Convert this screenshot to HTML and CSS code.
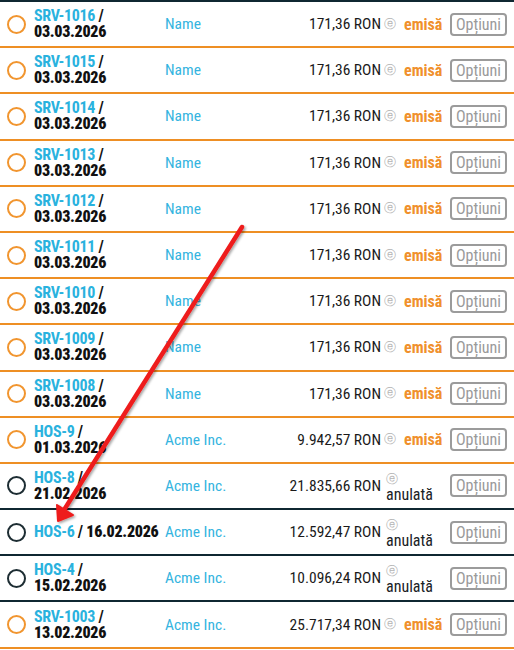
FILE: index.html
```html
<!DOCTYPE html>
<html lang="ro">
<head>
<meta charset="utf-8">
<title>Facturi</title>
<link rel="stylesheet" href="styles.css">
</head>
<body>
<div class="list">
  <div class="row orange">
    <div class="c-radio"><span class="radio"></span></div>
    <div class="c-id"><a class="num">SRV-1016</a> /<br><b>03.03.2026</b></div>
    <div class="c-name">Name</div>
    <div class="c-amount">171,36 RON</div>
    <div class="c-status"><span class="e">ⓔ</span><span class="st-em">emisă</span></div>
    <div class="c-btn"><span class="btn">Opțiuni</span></div>
  </div>
  <div class="row orange">
    <div class="c-radio"><span class="radio"></span></div>
    <div class="c-id"><a class="num">SRV-1015</a> /<br><b>03.03.2026</b></div>
    <div class="c-name">Name</div>
    <div class="c-amount">171,36 RON</div>
    <div class="c-status"><span class="e">ⓔ</span><span class="st-em">emisă</span></div>
    <div class="c-btn"><span class="btn">Opțiuni</span></div>
  </div>
  <div class="row orange">
    <div class="c-radio"><span class="radio"></span></div>
    <div class="c-id"><a class="num">SRV-1014</a> /<br><b>03.03.2026</b></div>
    <div class="c-name">Name</div>
    <div class="c-amount">171,36 RON</div>
    <div class="c-status"><span class="e">ⓔ</span><span class="st-em">emisă</span></div>
    <div class="c-btn"><span class="btn">Opțiuni</span></div>
  </div>
  <div class="row orange">
    <div class="c-radio"><span class="radio"></span></div>
    <div class="c-id"><a class="num">SRV-1013</a> /<br><b>03.03.2026</b></div>
    <div class="c-name">Name</div>
    <div class="c-amount">171,36 RON</div>
    <div class="c-status"><span class="e">ⓔ</span><span class="st-em">emisă</span></div>
    <div class="c-btn"><span class="btn">Opțiuni</span></div>
  </div>
  <div class="row orange">
    <div class="c-radio"><span class="radio"></span></div>
    <div class="c-id"><a class="num">SRV-1012</a> /<br><b>03.03.2026</b></div>
    <div class="c-name">Name</div>
    <div class="c-amount">171,36 RON</div>
    <div class="c-status"><span class="e">ⓔ</span><span class="st-em">emisă</span></div>
    <div class="c-btn"><span class="btn">Opțiuni</span></div>
  </div>
  <div class="row orange">
    <div class="c-radio"><span class="radio"></span></div>
    <div class="c-id"><a class="num">SRV-1011</a> /<br><b>03.03.2026</b></div>
    <div class="c-name">Name</div>
    <div class="c-amount">171,36 RON</div>
    <div class="c-status"><span class="e">ⓔ</span><span class="st-em">emisă</span></div>
    <div class="c-btn"><span class="btn">Opțiuni</span></div>
  </div>
  <div class="row orange">
    <div class="c-radio"><span class="radio"></span></div>
    <div class="c-id"><a class="num">SRV-1010</a> /<br><b>03.03.2026</b></div>
    <div class="c-name">Name</div>
    <div class="c-amount">171,36 RON</div>
    <div class="c-status"><span class="e">ⓔ</span><span class="st-em">emisă</span></div>
    <div class="c-btn"><span class="btn">Opțiuni</span></div>
  </div>
  <div class="row orange">
    <div class="c-radio"><span class="radio"></span></div>
    <div class="c-id"><a class="num">SRV-1009</a> /<br><b>03.03.2026</b></div>
    <div class="c-name">Name</div>
    <div class="c-amount">171,36 RON</div>
    <div class="c-status"><span class="e">ⓔ</span><span class="st-em">emisă</span></div>
    <div class="c-btn"><span class="btn">Opțiuni</span></div>
  </div>
  <div class="row orange">
    <div class="c-radio"><span class="radio"></span></div>
    <div class="c-id"><a class="num">SRV-1008</a> /<br><b>03.03.2026</b></div>
    <div class="c-name">Name</div>
    <div class="c-amount">171,36 RON</div>
    <div class="c-status"><span class="e">ⓔ</span><span class="st-em">emisă</span></div>
    <div class="c-btn"><span class="btn">Opțiuni</span></div>
  </div>
  <div class="row orange">
    <div class="c-radio"><span class="radio"></span></div>
    <div class="c-id"><a class="num">HOS-9</a> /<br><b>01.03.2026</b></div>
    <div class="c-name">Acme Inc.</div>
    <div class="c-amount">9.942,57 RON</div>
    <div class="c-status"><span class="e">ⓔ</span><span class="st-em">emisă</span></div>
    <div class="c-btn"><span class="btn">Opțiuni</span></div>
  </div>
  <div class="row dark">
    <div class="c-radio"><span class="radio"></span></div>
    <div class="c-id"><a class="num">HOS-8</a> /<br><b>21.02.2026</b></div>
    <div class="c-name">Acme Inc.</div>
    <div class="c-amount">21.835,66 RON</div>
    <div class="c-status stack"><span class="e">ⓔ</span><span class="st-an">anulată</span></div>
    <div class="c-btn"><span class="btn">Opțiuni</span></div>
  </div>
  <div class="row dark">
    <div class="c-radio"><span class="radio"></span></div>
    <div class="c-id one"><a class="num">HOS-6</a> / <b>16.02.2026</b></div>
    <div class="c-name">Acme Inc.</div>
    <div class="c-amount">12.592,47 RON</div>
    <div class="c-status stack"><span class="e">ⓔ</span><span class="st-an">anulată</span></div>
    <div class="c-btn"><span class="btn">Opțiuni</span></div>
  </div>
  <div class="row dark">
    <div class="c-radio"><span class="radio"></span></div>
    <div class="c-id"><a class="num">HOS-4</a> /<br><b>15.02.2026</b></div>
    <div class="c-name">Acme Inc.</div>
    <div class="c-amount">10.096,24 RON</div>
    <div class="c-status stack"><span class="e">ⓔ</span><span class="st-an">anulată</span></div>
    <div class="c-btn"><span class="btn">Opțiuni</span></div>
  </div>
  <div class="row orange">
    <div class="c-radio"><span class="radio"></span></div>
    <div class="c-id"><a class="num">SRV-1003</a> /<br><b>13.02.2026</b></div>
    <div class="c-name">Acme Inc.</div>
    <div class="c-amount">25.717,34 RON</div>
    <div class="c-status"><span class="e">ⓔ</span><span class="st-em">emisă</span></div>
    <div class="c-btn"><span class="btn">Opțiuni</span></div>
  </div>
</div>
<svg class="arrow" width="514" height="650" viewBox="0 0 514 650" aria-hidden="true">
  <defs>
    <filter id="sh" x="-20%" y="-20%" width="140%" height="140%">
      <feDropShadow dx="1.5" dy="1.5" stdDeviation="1.2" flood-color="#000" flood-opacity="0.35"/>
    </filter>
  </defs>
  <g filter="url(#sh)" fill="#ee1c1c" stroke="#ee1c1c">
    <line x1="242" y1="227" x2="64" y2="510" stroke-width="4.5" stroke-linecap="round"/>
    <polygon points="58,521 57,505 73,515" stroke-width="2" stroke-linejoin="round"/>
  </g>
</svg>
</body>
</html>
```
FILE: styles.css
```css
html, body {
  margin: 0;
  padding: 0;
  background: #fff;
}
body {
  font-family: "Roboto Condensed", "DejaVu Sans Condensed", sans-serif;
  font-size: 15.5px;
  color: #161616;
  position: relative;
  width: 514px;
  overflow: hidden;
}
.list {
  border-top: 2px solid #0f2731;
}
.row {
  display: grid;
  grid-template-columns: 34px 131px 1fr auto 70px 56px;
  align-items: center;
  height: 44.2px;
  padding-right: 7px;
  border-bottom: 2px solid #ee8f24;
}
.row.dark {
  border-bottom-color: #0f2731;
}
.c-radio {
  display: flex;
  align-items: center;
  padding-left: 7px;
}
.radio {
  width: 15px;
  height: 15px;
  border-radius: 50%;
  border: 2.5px solid #f1952f;
}
.dark .radio {
  border-color: #1d2d33;
}
.c-id {
  line-height: 16px;
  font-weight: bold;
  font-size: 16px;
  letter-spacing: -0.3px;
  color: #111;
}
.c-id.one {
  white-space: nowrap;
}
.num {
  color: #29b2de;
}
.c-name {
  color: #35b4e0;
}
.c-amount {
  text-align: right;
  color: #1a1a1a;
}
.c-status {
  display: flex;
  align-items: center;
  padding-left: 3px;
  gap: 8px;
}
.c-status.stack {
  flex-direction: column;
  align-items: flex-start;
  gap: 0;
  padding-left: 5px;
  margin-top: 4px;
}
.e {
  color: #b4b4b4;
  font-family: "DejaVu Sans", sans-serif;
  font-size: 12px;
  line-height: 13px;
}
.st-em {
  color: #f0902c;
  font-weight: bold;
  font-size: 16px;
}
.st-an {
  color: #1a2226;
  font-size: 16px;
  line-height: 17px;
}
.c-btn {
  display: flex;
  justify-content: flex-end;
}
.btn {
  display: inline-block;
  border: 2px solid #9b9b9b;
  border-radius: 4px;
  color: #9a9a9a;
  font-size: 16px;
  line-height: 19px;
  padding: 0 4px;
  background: #fff;
}
.arrow {
  position: absolute;
  left: 0;
  top: 0;
  pointer-events: none;
}
```
